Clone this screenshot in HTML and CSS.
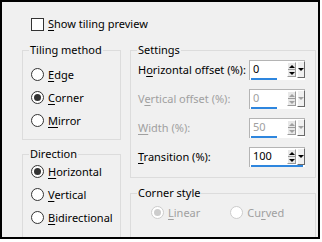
FILE: index.html
```html
<!DOCTYPE html>
<html>
<head>
<meta charset="utf-8">
<link rel="stylesheet" href="styles.css">
</head>
<body>
<div class="frame">
  <label class="check-row">
    <span class="checkbox"></span>
    <span><u>S</u>how tiling preview</span>
  </label>
  <div class="columns">
    <div class="col col-left">
      <fieldset class="group group-tiling">
        <legend>Tiling method</legend>
        <div class="radios radios-tiling">
          <div class="radio-row"><span class="radio"></span><span><u>E</u>dge</span></div>
          <div class="radio-row"><span class="radio checked"></span><span><u>C</u>orner</span></div>
          <div class="radio-row"><span class="radio"></span><span><u>M</u>irror</span></div>
        </div>
      </fieldset>
      <fieldset class="group group-direction">
        <legend>Direction</legend>
        <div class="radios radios-direction">
          <div class="radio-row"><span class="radio checked"></span><span><u>H</u>orizontal</span></div>
          <div class="radio-row"><span class="radio"></span><span><u>V</u>ertical</span></div>
          <div class="radio-row"><span class="radio"></span><span><u>B</u>idirectional</span></div>
        </div>
      </fieldset>
    </div>
    <div class="col col-right">
      <fieldset class="group group-settings">
        <legend>Settings</legend>
        <div class="settings">
          <div class="set-label">H<u>o</u>rizontal offset (%):</div>
          <div class="spin">
            <div class="spin-top"><span class="val">0</span><div class="arrows"><span class="up"></span><span class="dn"></span></div><div class="drop"></div></div>
            <span class="bar" style="width:26px"></span>
          </div>
          <div class="set-label disabled">V<u>e</u>rtical offset (%):</div>
          <div class="spin disabled">
            <div class="spin-top"><span class="val">0</span><div class="arrows"><span class="up"></span><span class="dn"></span></div><div class="drop"></div></div>
            <span class="bar" style="width:26px"></span>
          </div>
          <div class="set-label disabled"><u>W</u>idth (%):</div>
          <div class="spin disabled">
            <div class="spin-top"><span class="val">50</span><div class="arrows"><span class="up"></span><span class="dn"></span></div><div class="drop"></div></div>
            <span class="bar" style="width:26px"></span>
          </div>
          <div class="set-label"><u>T</u>ransition (%):</div>
          <div class="spin">
            <div class="spin-top"><span class="val">100</span><div class="arrows"><span class="up"></span><span class="dn"></span></div><div class="drop"></div></div>
            <span class="bar" style="width:52px"></span>
          </div>
        </div>
      </fieldset>
      <fieldset class="group group-corner">
        <legend>Corner style</legend>
        <div class="corner-radios">
          <div class="radio-row disabled"><span class="radio checked"></span><span><u>L</u>inear</span></div>
          <div class="radio-row disabled"><span class="radio"></span><span>Cu<u>r</u>ved</span></div>
        </div>
      </fieldset>
    </div>
  </div>
</div>
</body>
</html>
```

FILE: styles.css
```css
html, body {
  margin: 0;
  padding: 0;
  background: #ffffff;
}
body {
  font-family: "Noto Sans", "Open Sans", sans-serif;
  font-size: 11px;
  color: #000;
}
u { text-decoration-thickness: 1px; text-underline-offset: 2px; }
.frame {
  box-sizing: border-box;
  width: 320px;
  height: 239px;
  border: 2px solid #000;
  background: #f0f0f0;
  overflow: hidden;
  padding: 14px 0 0 20px;
}
.check-row {
  display: flex;
  align-items: center;
  height: 16px;
  margin-left: 9px;
  gap: 4px;
  line-height: 16px;
}
.checkbox {
  box-sizing: border-box;
  width: 13px;
  height: 13px;
  border: 1px solid #333;
  background: #fff;
}
.columns {
  display: grid;
  grid-template-columns: 99px 186px;
  column-gap: 9px;
  margin-top: 10px;
}
.col { display: flex; flex-direction: column; }
.group {
  margin: 0;
  padding: 0;
  border: 1px solid #dcdcdc;
  min-width: 0;
}
.group legend {
  margin-left: 6px;
  padding: 0 1px;
  line-height: 16px;
  height: 16px;
}
.radios { padding-left: 8px; }
.radios-tiling { padding-top: 5px; padding-bottom: 7px; }
.group-direction { margin-top: 6px; height: 130px; }
.radios-direction { margin-top: -2px; }
.radio-row {
  display: flex;
  align-items: center;
  height: 23px;
  gap: 4px;
}
.radio {
  box-sizing: border-box;
  width: 13px;
  height: 13px;
  border: 1px solid #333;
  border-radius: 50%;
  background: #fff;
  display: flex;
  align-items: center;
  justify-content: center;
}
.radio.checked::after {
  content: "";
  width: 7px;
  height: 7px;
  border-radius: 50%;
  background: #333;
}
.radio-row.disabled { color: #a0a0a0; }
.radio-row.disabled .radio { border-color: #cccccc; }
.radio-row.disabled .radio.checked::after { background: #cccccc; }

.settings {
  display: grid;
  grid-template-columns: 1fr 56px;
  row-gap: 9px;
  align-items: center;
  padding: 2px 10px 10px 7px;
}
.set-label { line-height: 16px; white-space: nowrap; }
.set-label.disabled { color: #a0a0a0; }
.spin {
  display: flex;
  flex-direction: column;
  height: 20px;
  box-sizing: border-box;
  border: 1px solid #b4b4b4;
  border-right: 0;
  border-bottom: 0;
  background: #fff;
}
.spin-top {
  flex: 1;
  display: flex;
  min-height: 0;
}
.val { flex: 1; padding-left: 3px; line-height: 16px; }
.bar { display: block; height: 2px; background: #2e86de; margin-left: 1px; flex: none; }
.spin.disabled .val { color: #a0a0a0; }
.arrows {
  width: 9px;
  box-sizing: border-box;
  display: flex;
  flex-direction: column;
  margin: 1px 1px 1px 0;
  border-top: 1px solid #ffffff;
  border-left: 1px solid #ffffff;
  border-right: 1px solid #9a9a9a;
  border-bottom: 1px solid #9a9a9a;
  background: #e8e8e8;
}
.arrows span { flex: 1; display: flex; align-items: center; justify-content: center; }
.arrows .up { border-bottom: 1px solid #9a9a9a; }
.arrows .up::after {
  content: "";
  border-left: 3px solid transparent;
  border-right: 3px solid transparent;
  border-bottom: 3px solid #000;
}
.arrows .dn::after {
  content: "";
  border-left: 3px solid transparent;
  border-right: 3px solid transparent;
  border-top: 3px solid #000;
}
.drop {
  width: 8px;
  box-sizing: border-box;
  border-left: 1px solid #fff;
  border-top: 1px solid #fff;
  border-right: 1px solid #696969;
  border-bottom: 1px solid #696969;
  background: #f0f0f0;
  display: flex;
  align-items: center;
  justify-content: center;
}
.drop::after {
  content: "";
  border-left: 3px solid transparent;
  border-right: 3px solid transparent;
  border-top: 3px solid #000;
}
.spin.disabled .arrows span::after { border-top-color: #a0a0a0; border-bottom-color: #a0a0a0; }
.spin.disabled .drop::after { border-top-color: #a0a0a0; }

.group-corner { margin-top: 7px; height: 70px; }
.corner-radios { display: flex; gap: 30px; padding-left: 20px; }
```
